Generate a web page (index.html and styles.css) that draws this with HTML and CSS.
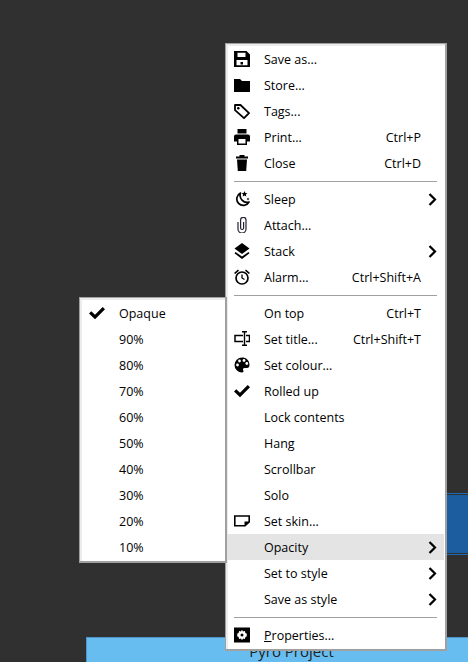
FILE: index.html
```html
<!DOCTYPE html>
<html lang="en">
<head>
    <meta charset="UTF-8">
    <meta name="viewport" content="width=device-width, initial-scale=1.0">
    <title>Note menu</title>
    <link rel="stylesheet" href="styles.css">
</head>
<body>
    <div class="note-side"></div>
    <div class="note-title">Pyro Project</div>

    <div class="menu main-menu">
        <div class="item"><svg class="icon" viewBox="0 0 16 16"><path d="M0 0h12.500L16 3.500V16H0z M3.500 1.800v4.200h8V1.800z M2.500 9v5.200h11V9z" fill-rule="evenodd"/><rect x="6.500" y="11" width="2.500" height="2.500"/></svg><span class="label">Save as...</span></div>
        <div class="item"><svg class="icon" viewBox="0 0 16 16"><path d="M0 2h6l2 2h8v11H0z"/></svg><span class="label">Store...</span></div>
        <div class="item"><svg class="icon" viewBox="0 0 16 16"><path d="M1 2h5.500l8.500 8.200-5 5-9-8z" fill="none" stroke="#000" stroke-width="1.800" stroke-linejoin="round"/><circle cx="4.300" cy="5.200" r="1.300"/></svg><span class="label">Tags...</span></div>
        <div class="item"><svg class="icon" viewBox="0 0 16 16"><path d="M3.500 0h9v4.500h-9z M2 5.500h12a2 2 0 0 1 2 2V12.500h-3V16H3v-3.500H0V7.500a2 2 0 0 1 2-2z M4.500 10v4.500h7V10z" fill-rule="evenodd"/></svg><span class="label">Print...</span><span class="keys">Ctrl+P</span></div>
        <div class="item"><svg class="icon" viewBox="0 0 16 16"><path d="M5.500 0h5v1.500H14v2H2v-2h3.500z M3 4.500h10l-.8 11.500H3.800z"/></svg><span class="label">Close</span><span class="keys">Ctrl+D</span></div>
        <div class="sep"></div>
        <div class="item"><svg class="icon" viewBox="0 0 16 16"><path d="M6.500 2a6.500 6.500 0 1 0 8.500 9 7 7 0 0 1-8.500-9z" fill="none" stroke="#000" stroke-width="1.700" stroke-linejoin="round"/><path d="M10.500 0l.9 1.900 2 .3-1.500 1.400.4 2-1.800-1-1.800 1 .4-2L7.600 2.200l2-.3z M14 6.500l.5 1 1 .5-1 .5-.5 1-.5-1-1-.5 1-.5z"/></svg><span class="label">Sleep</span><svg class="arrow" viewBox="0 0 9 13"><path d="M1.500 1l5.500 5.500-5.500 5.500" fill="none" stroke="#000" stroke-width="2.200"/></svg></div>
        <div class="item"><svg class="icon" viewBox="0 0 16 16"><path d="M4 5v7a4 4 0 0 0 8 0V3a2.700 2.700 0 0 0-5.400 0V11a1.500 1.500 0 0 0 3 0V5" fill="none" stroke="#223" stroke-width="1.200"/></svg><span class="label">Attach...</span></div>
        <div class="item"><svg class="icon" viewBox="0 0 16 16"><path d="M8 0l7.500 5.500L8 11 .5 5.500z M1.500 9L8 13.500 14.500 9l1 1.300L8 16 .5 10.300z"/></svg><span class="label">Stack</span><svg class="arrow" viewBox="0 0 9 13"><path d="M1.500 1l5.500 5.500-5.500 5.500" fill="none" stroke="#000" stroke-width="2.200"/></svg></div>
        <div class="item"><svg class="icon" viewBox="0 0 16 16"><circle cx="8" cy="9" r="6" fill="none" stroke="#000" stroke-width="1.700"/><path d="M8 5.500V9l2.500 1.500" fill="none" stroke="#000" stroke-width="1.300"/><path d="M0 4L4 .5l1 1.200-3.800 3.400z M16 4L12 .5l-1 1.200 3.800 3.400z"/></svg><span class="label">Alarm...</span><span class="keys">Ctrl+Shift+A</span></div>
        <div class="sep"></div>
        <div class="item"><span class="icon"></span><span class="label">On top</span><span class="keys">Ctrl+T</span></div>
        <div class="item"><svg class="icon" viewBox="0 0 16 16"><path d="M9 4.500H1v6h8 M12 4.500h3.500v6H12" fill="none" stroke="#000" stroke-width="1.500"/><path d="M8 .8h5 M10.500 .8v13.400 M8 14.200h5" fill="none" stroke="#000" stroke-width="1.400"/></svg><span class="label">Set title...</span><span class="keys">Ctrl+Shift+T</span></div>
        <div class="item"><svg class="icon" viewBox="0 0 16 16"><path d="M8 .5a7.500 7.500 0 0 0 0 15c1.800 0 1.700-1.500 1.200-2.300-.6-1 0-2.200 1.300-2.200h2.500c1.500 0 2.500-1 2.500-3C15.500 3 12 .5 8 .5z"/><circle cx="3.500" cy="8" r="1.400" fill="#fff"/><circle cx="5.500" cy="4" r="1.400" fill="#fff"/><circle cx="10" cy="3.500" r="1.400" fill="#fff"/><circle cx="12.800" cy="6.500" r="1.400" fill="#fff"/></svg><span class="label">Set colour...</span></div>
        <div class="item"><svg class="icon" viewBox="0 0 16 16"><path d="M0 8.500l2.300-2.300L6 9.700 13.700 2 16 4.300 6 14.300z"/></svg><span class="label">Rolled up</span></div>
        <div class="item"><span class="icon"></span><span class="label">Lock contents</span></div>
        <div class="item"><span class="icon"></span><span class="label">Hang</span></div>
        <div class="item"><span class="icon"></span><span class="label">Scrollbar</span></div>
        <div class="item"><span class="icon"></span><span class="label">Solo</span></div>
        <div class="item"><svg class="icon" viewBox="0 0 16 16"><path d="M.8 3h14.400v6L11 12.800H.8z" fill="none" stroke="#000" stroke-width="1.600"/><path d="M10.500 8.500H16l-5.500 5z"/></svg><span class="label">Set skin...</span></div>
        <div class="item active"><span class="icon"></span><span class="label">Opacity</span><svg class="arrow" viewBox="0 0 9 13"><path d="M1.500 1l5.500 5.500-5.500 5.500" fill="none" stroke="#000" stroke-width="2.200"/></svg></div>
        <div class="item"><span class="icon"></span><span class="label">Set to style</span><svg class="arrow" viewBox="0 0 9 13"><path d="M1.500 1l5.500 5.500-5.500 5.500" fill="none" stroke="#000" stroke-width="2.200"/></svg></div>
        <div class="item"><span class="icon"></span><span class="label">Save as style</span><svg class="arrow" viewBox="0 0 9 13"><path d="M1.500 1l5.500 5.500-5.500 5.500" fill="none" stroke="#000" stroke-width="2.200"/></svg></div>
        <div class="sep"></div>
        <div class="item"><svg class="icon" viewBox="0 0 16 16"><path d="M0 .5h16v15H0z M8 2.800l1 1.700 1.900-.5.500 1.900 1.800 1-.9 1.100.9 1.100-1.800 1-.5 1.900-1.900-.5-1 1.700-1-1.700-1.900.5-.5-1.900-1.800-1 .9-1.100-.9-1.100 1.800-1 .5-1.900 1.900.5z" fill-rule="evenodd"/><circle cx="8" cy="8" r="1.500"/></svg><span class="label"><u>P</u>roperties...</span></div>
    </div>

    <div class="menu sub-menu">
        <div class="item"><svg class="icon" viewBox="0 0 16 16"><path d="M0 8.500l2.300-2.300L6 9.700 13.700 2 16 4.300 6 14.300z"/></svg><span class="label">Opaque</span></div>
        <div class="item"><span class="icon"></span><span class="label">90%</span></div>
        <div class="item"><span class="icon"></span><span class="label">80%</span></div>
        <div class="item"><span class="icon"></span><span class="label">70%</span></div>
        <div class="item"><span class="icon"></span><span class="label">60%</span></div>
        <div class="item"><span class="icon"></span><span class="label">50%</span></div>
        <div class="item"><span class="icon"></span><span class="label">40%</span></div>
        <div class="item"><span class="icon"></span><span class="label">30%</span></div>
        <div class="item"><span class="icon"></span><span class="label">20%</span></div>
        <div class="item"><span class="icon"></span><span class="label">10%</span></div>
    </div>
</body>
</html>
```
FILE: styles.css
```css
html, body {
    margin: 0;
    height: 100%;
    overflow: hidden;
}

body {
    position: relative;
    background-color: #303030;
    font-family: "Open Sans", "Noto Sans", sans-serif;
    font-size: 12.5px;
    color: #000;
}

.note-side {
    position: absolute;
    left: 446px;
    top: 493px;
    width: 22px;
    height: 62px;
    box-sizing: border-box;
    padding: 1px 0;
    background-color: #1c5da0;
    background-clip: content-box;
    border-top: 1px solid #1f6cb8;
    border-bottom: 1px solid #1f6cb8;
}

.note-title {
    position: absolute;
    left: 86px;
    top: 637px;
    width: 382px;
    height: 25px;
    box-sizing: border-box;
    padding-left: 28px;
    background-color: #68bdf0;
    border: 1px solid #4f93cc;
    border-width: 1px 0 0 1px;
    text-align: center;
    font-size: 15px;
    line-height: 26px;
    color: #222;
}

.menu {
    position: absolute;
    box-sizing: border-box;
    background-color: #fff;
    border: 1px solid #a0a0a0;
    border-width: 1px 2px 2px 1px;
    box-shadow: inset 1px 1px 0 1px #ececec;
    padding: 2px 1px 1px;
}

.main-menu {
    left: 225px;
    top: 43px;
    width: 222px;
}

.sub-menu {
    left: 79px;
    top: 297px;
    width: 148px;
}

.item {
    display: flex;
    align-items: center;
    height: 26px;
    padding: 0 7px;
}

.sub-menu .item {
    padding-left: 8px;
}

.item.active {
    background-color: #e4e4e4;
}

.icon {
    width: 16px;
    height: 16px;
    flex: none;
    margin-right: 14px;
}

.label {
    flex: 1;
    white-space: nowrap;
}

.keys {
    margin-right: 16px;
    white-space: nowrap;
}

.arrow {
    width: 9px;
    height: 13px;
    flex: none;
}

.sep {
    height: 1px;
    margin: 5px 7px 4px 7px;
    background-color: #a0a0a0;
}
```
